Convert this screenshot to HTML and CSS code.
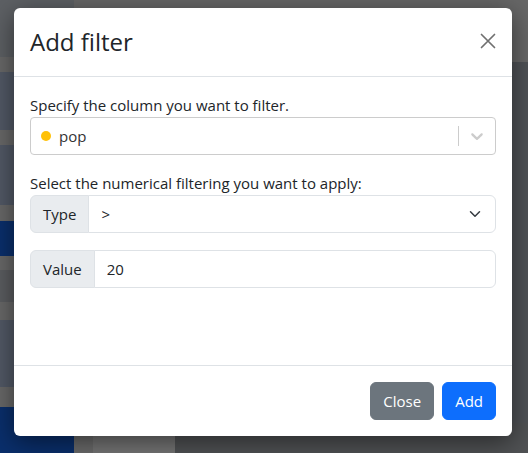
FILE: index.html
```html
<!DOCTYPE html>
<html lang="en">
<head>
<meta charset="utf-8">
<title>Add filter</title>
<link rel="stylesheet" href="styles.css">
</head>
<body>
<div class="bg">
  <div class="bg-left">
    <div class="band b-top"></div>
    <div class="band b-gray h15"></div>
    <div class="band b-slate h58"></div>
    <div class="band b-gray h15"></div>
    <div class="band b-slate h60"></div>
    <div class="band b-gray h16"></div>
    <div class="band b-blue h35"></div>
    <div class="band b-gray h14"></div>
    <div class="band b-dark h32"></div>
    <div class="band b-gray h18"></div>
    <div class="band b-slate h67"></div>
    <div class="band b-gray h20"></div>
    <div class="band b-blue b-fill"></div>
  </div>
  <div class="bg-right">
    <div class="bg-top"></div>
    <div class="bg-mid"></div>
    <div class="bg-bottom">
      <div class="seg seg-a"></div>
      <div class="seg seg-b"></div>
      <div class="seg seg-c"></div>
    </div>
  </div>
</div>

<div class="modal">
  <div class="modal-header">
    <h4 class="modal-title">Add filter</h4>
    <button class="btn-close" type="button" aria-label="Close">
      <svg width="16" height="16" viewBox="0 0 16 16"><path d="M1.5 1.5 L14.5 14.5 M14.5 1.5 L1.5 14.5" stroke="#707070" stroke-width="1.7" stroke-linecap="round" fill="none"/></svg>
    </button>
  </div>
  <div class="modal-body">
    <div class="form-label">Specify the column you want to filter.</div>
    <div class="rs-control">
      <div class="rs-value">
        <span class="rs-dot"></span>
        <span class="rs-text">pop</span>
      </div>
      <div class="rs-indicators">
        <span class="rs-sep"></span>
        <span class="rs-arrow">
          <svg width="20" height="20" viewBox="0 0 20 20"><path fill="#cccccc" d="M4.516 7.548c0.436-0.446 1.043-0.481 1.576 0l3.908 3.747 3.908-3.747c0.533-0.481 1.141-0.446 1.574 0 0.436 0.445 0.408 1.197 0 1.615-0.406 0.418-4.695 4.502-4.695 4.502-0.217 0.223-0.502 0.335-0.787 0.335s-0.57-0.112-0.789-0.335c0 0-4.287-4.084-4.695-4.502s-0.436-1.17 0-1.615z"/></svg>
        </span>
      </div>
    </div>

    <div class="form-label second">Select the numerical filtering you want to apply:</div>
    <div class="input-group">
      <span class="addon">Type</span>
      <div class="form-select">
        <span>&gt;</span>
        <svg width="12" height="12" viewBox="0 0 16 16"><path d="m2 5 6 6 6-6" fill="none" stroke="#343a40" stroke-width="2" stroke-linecap="round" stroke-linejoin="round"/></svg>
      </div>
    </div>

    <div class="input-group">
      <span class="addon">Value</span>
      <input class="form-control" type="text" value="20">
    </div>
  </div>
  <div class="modal-footer">
    <button class="btn btn-secondary" type="button">Close</button>
    <button class="btn btn-primary" type="button">Add</button>
  </div>
</div>
</body>
</html>
```

FILE: styles.css
```css
* { box-sizing: border-box; }

html, body {
  margin: 0;
  padding: 0;
  width: 528px;
  height: 453px;
  overflow: hidden;
  background: #55585c;
  font-family: "Open Sans", "Noto Sans", sans-serif;
  font-size: 15px;
  line-height: 24px;
  color: #212529;
}

/* dimmed page behind the backdrop */
.bg {
  display: flex;
  height: 453px;
}
.bg-left {
  width: 74px;
  display: flex;
  flex-direction: column;
}
.band { flex: none; }
.b-top { height: 57px; background: #5d6064; }
.b-gray { background: #686868; }
.b-slate { background: #525966; }
.b-dark { background: #5b5d60; }
.b-blue { background: #0a2f6c; }
.b-fill { flex: 1; }
.h14 { height: 14px; }
.h15 { height: 15px; }
.h16 { height: 16px; }
.h18 { height: 18px; }
.h20 { height: 20px; }
.h32 { height: 32px; }
.h35 { height: 35px; }
.h58 { height: 58px; }
.h60 { height: 60px; }
.h67 { height: 67px; }

.bg-right {
  flex: 1;
  display: flex;
  flex-direction: column;
}
.bg-top { height: 62px; background: #676767; }
.bg-mid { flex: 1; background: #4f5256; }
.bg-bottom {
  height: 30px;
  display: flex;
}
.seg-a { width: 19px; background: #6b6b6b; }
.seg-b { width: 82px; background: #757575; }
.seg-c { flex: 1; background: #505254; }

/* modal */
.modal {
  position: absolute;
  left: 14px;
  top: 8px;
  width: 498px;
  background: #fff;
  border-radius: 6px;
  box-shadow: 0 6px 26px rgba(0, 0, 0, 0.5);
  display: flex;
  flex-direction: column;
}

.modal-header {
  display: flex;
  align-items: center;
  justify-content: space-between;
  padding: 19px 16px;
  border-bottom: 1px solid #dee2e6;
}
.modal-title {
  margin: 0;
  font-size: 24px;
  line-height: 30px;
  font-weight: 500;
  color: #212529;
}
.btn-close {
  border: 0;
  background: transparent;
  padding: 0;
  width: 16px;
  height: 16px;
  display: flex;
  margin-top: -3px;
}

.modal-body {
  padding: 16px;
  min-height: 288px;
}
.form-label {
  height: 24px;
}
.form-label.second {
  margin-top: 16px;
}

/* react-select like control */
.rs-control {
  display: flex;
  align-items: center;
  height: 38px;
  border: 1px solid #cccccc;
  border-radius: 4px;
  background: #fff;
}
.rs-value {
  flex: 1;
  display: flex;
  align-items: center;
  gap: 8px;
  padding: 2px 10px;
  color: #333333;
}
.rs-dot {
  width: 10px;
  height: 10px;
  border-radius: 50%;
  background: #ffc107;
}
.rs-indicators {
  display: flex;
  align-items: center;
  align-self: stretch;
}
.rs-sep {
  width: 1px;
  align-self: stretch;
  margin: 8px 0;
  background: #cccccc;
}
.rs-arrow {
  display: flex;
  padding: 8px;
}

/* bootstrap input group */
.input-group {
  display: flex;
  height: 38px;
  margin-top: 0;
}
.input-group + .input-group {
  margin-top: 17px;
}
.addon {
  display: flex;
  align-items: center;
  padding: 6px 12px;
  background: #e9ecef;
  border: 1px solid #dee2e6;
  border-radius: 6px 0 0 6px;
  color: #212529;
}
.form-select,
.form-control {
  flex: 1;
  min-width: 0;
  margin-left: -1px;
  border: 1px solid #dee2e6;
  border-radius: 0 6px 6px 0;
  background: #fff;
  padding: 6px 12px;
  font: inherit;
  color: #212529;
}
.form-select {
  display: flex;
  align-items: center;
  justify-content: space-between;
}
.form-select svg {
  margin-right: 2px;
}
.form-control {
  outline: none;
}

/* footer */
.modal-footer {
  display: flex;
  justify-content: flex-end;
  gap: 8px;
  padding: 16px;
  border-top: 1px solid #dee2e6;
}
.btn {
  border: 1px solid transparent;
  border-radius: 6px;
  padding: 6px 12px;
  height: 38px;
  font: inherit;
  color: #fff;
}
.btn-secondary {
  background: #6c757d;
  border-color: #6c757d;
}
.btn-primary {
  background: #0d6efd;
  border-color: #0d6efd;
}
```
